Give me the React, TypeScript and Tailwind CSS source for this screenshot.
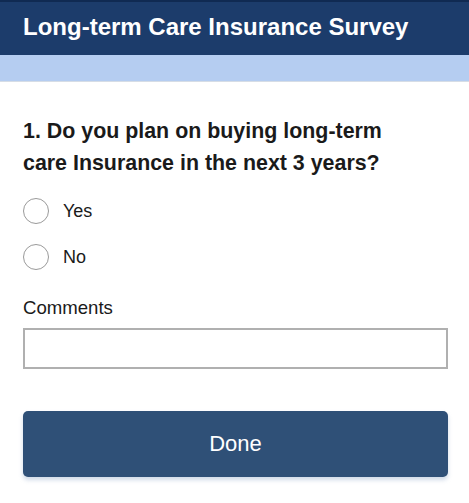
import React, { useState } from 'react';

const OPTIONS = ['Yes', 'No'];

export default function App() {
  const [answer, setAnswer] = useState<string | null>(null);
  const [comment, setComment] = useState('');

  return (
    <div className="w-[469px] h-[503px] bg-white overflow-hidden" style={{ fontFamily: '"Liberation Sans", Arial, sans-serif' }}>
      <div className="h-[55px] bg-[#1c3c6b] border-t-2 border-[#102a52] flex items-center px-[23px] pb-[3px]">
        <h1 className="text-white font-bold text-[24px] leading-none">Long-term Care Insurance Survey</h1>
      </div>
      <div className="h-[27px] bg-[#b5cdf1] border-b border-[#d6dde6]" />

      <div className="px-[23px]">
        <h2 className="mt-[33px] text-[21.4px] font-bold leading-[32px] text-[#1a1a1a] w-[395px]">
          1. Do you plan on buying long-term care Insurance in the next 3 years?
        </h2>

        <div className="mt-[19px] flex flex-col gap-[20px]">
          {OPTIONS.map(o => (
            <label key={o} className="flex items-center gap-[14px] cursor-pointer" onClick={() => setAnswer(o)}>
              <span className="w-[26px] h-[26px] rounded-full border border-[#9a9a9a] flex items-center justify-center">
                {answer === o && <span className="w-[14px] h-[14px] rounded-full bg-[#2f5077]" />}
              </span>
              <span className="text-[18px] text-[#1a1a1a] leading-none">{o}</span>
            </label>
          ))}
        </div>

        <div className="mt-[29px] text-[18.6px] text-[#1a1a1a] leading-none">Comments</div>
        <input
          value={comment}
          onChange={e => setComment(e.target.value)}
          className="mt-[10px] block w-[425px] h-[41px] border-2 border-[#b0b0b0] px-2 text-[16px] outline-none"
        />

        <button className="mt-[42px] w-[425px] h-[66px] rounded-[5px] bg-[#2f5077] text-white text-[22px] shadow-[0_3px_4px_rgba(120,150,190,0.35)]">
          Done
        </button>
      </div>
    </div>
  );
}
